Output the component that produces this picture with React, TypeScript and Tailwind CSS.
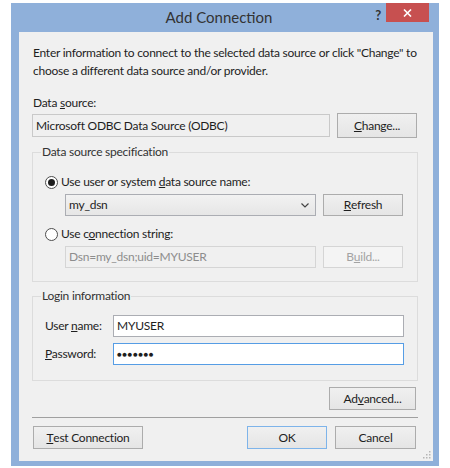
import React from 'react';

// Win8-style "Add Connection" dialog

const font = { fontFamily: 'Lato, "Noto Sans", sans-serif' };

const Btn: React.FC<{ children: React.ReactNode; className?: string; disabled?: boolean; isDefault?: boolean }> = ({
  children,
  className = '',
  disabled,
  isDefault,
}) => (
  <div
    className={`flex items-center justify-center border text-[12px] leading-none ${
      disabled
        ? 'border-[#d5d5d5] bg-[#f4f4f4] text-[#a3a3a3]'
        : isDefault
        ? 'border-[#7eb4ea] bg-gradient-to-b from-[#f0f0f0] to-[#e5e5e5] text-[#1e1e1e]'
        : 'border-[#acacac] bg-gradient-to-b from-[#f0f0f0] to-[#e5e5e5] text-[#1e1e1e]'
    } ${className}`}
  >
    {children}
  </div>
);

const Radio: React.FC<{ checked?: boolean; children: React.ReactNode }> = ({ checked, children }) => (
  <div className="flex h-[16px] items-center">
    <div className="flex h-[13px] w-[13px] items-center justify-center rounded-full border border-[#4d4d4d] bg-white">
      {checked && <div className="h-[7px] w-[7px] rounded-full bg-[#1e1e1e]" />}
    </div>
    <span className="ml-[3px] text-[12px] text-[#1e1e1e]">{children}</span>
  </div>
);

const GroupBox: React.FC<{ title: string; className?: string; children: React.ReactNode }> = ({
  title,
  className = '',
  children,
}) => (
  <div className={`relative border border-[#dcdcdc] ${className}`}>
    <span className="absolute -top-[10px] left-[8px] bg-[#f0f0f0] px-[1px] text-[12px] leading-[18px] text-[#333]">
      {title}
    </span>
    {children}
  </div>
);

export default function App() {
  return (
    <div className="h-[468px] w-[450px] bg-white pl-[11px] pt-[3px] tracking-[-0.25px]" style={font}>
      <div className="flex h-[463px] w-[428px] flex-col bg-[#8fb0da] pb-[5px] pl-[8px] pr-[6px]">
        {/* title bar */}
        <div className="relative flex h-[29px] shrink-0 items-center justify-center pr-[14px]">
          <span className="text-[15px] tracking-normal text-[#333]">Add Connection</span>
          <span className="absolute right-[52px] top-[3px] text-[13px] font-bold text-[#333]">?</span>
          <div className="absolute right-[4px] top-0 flex h-[19px] w-[43px] items-center justify-center bg-[#c75050]">
            <svg width="9" height="8" viewBox="0 0 9 8">
              <path d="M1 0.5 L8 7.5 M8 0.5 L1 7.5" stroke="white" strokeWidth="1.6" />
            </svg>
          </div>
        </div>

        {/* client area */}
        <div className="relative flex flex-1 flex-col bg-[#f0f0f0] pl-[13px] pr-[15px] pt-[12px] text-[12px] text-[#1e1e1e]">
          <p className="whitespace-nowrap pl-[1px] leading-[18px]">
            Enter information to connect to the selected data source or click "Change" to
            <br />
            choose a different data source and/or provider.
          </p>

          <div className="mt-[14px] pl-[1px] leading-[18px]">
            Data <u>s</u>ource:
          </div>
          <div className="mt-[1px] flex h-[25px] items-center">
            <div className="flex h-[23px] w-[298px] items-center border border-[#c9c9c9] bg-[#f0f0f0] pl-[3px]">
              Microsoft ODBC Data Source (ODBC)
            </div>
            <Btn className="ml-[7px] h-[25px] w-[80px]">
              <u>C</u>hange...
            </Btn>
          </div>

          <GroupBox title="Data source specification" className="mt-[14px] h-[130px] pl-[12px] pt-[21px]">
            <Radio checked>
              Use user or system <u>d</u>ata source name:
            </Radio>
            <div className="ml-[20px] mt-[4px] flex h-[22px]">
              <div className="flex w-[251px] items-center justify-between border border-[#abadb3] bg-gradient-to-b from-[#f2f2f2] to-[#e6e6e6] pl-[3px] pr-[6px]">
                <span>my_dsn</span>
                <svg width="8" height="5" viewBox="0 0 8 5">
                  <path d="M0.5 0.5 L4 4 L7.5 0.5" stroke="#444" strokeWidth="1.2" fill="none" />
                </svg>
              </div>
              <Btn className="ml-[7px] w-[80px]">
                <u>R</u>efresh
              </Btn>
            </div>
            <div className="mt-[10px]">
              <Radio>
                Use c<u>o</u>nnection string:
              </Radio>
            </div>
            <div className="ml-[20px] mt-[4px] flex h-[22px]">
              <div className="flex w-[251px] items-center border border-[#d5d5d5] bg-[#f0f0f0] pl-[3px] text-[#8d8d8d]">
                Dsn=my_dsn;uid=MYUSER
              </div>
              <Btn disabled className="ml-[7px] w-[80px]">
                B<u>u</u>ild...
              </Btn>
            </div>
          </GroupBox>

          <GroupBox title="Login information" className="mt-[14px] h-[85px] pl-[12px] pt-[18px]">
            <div className="flex h-[22px] items-center">
              <span className="w-[68px]">
                User <u>n</u>ame:
              </span>
              <div className="flex h-[22px] w-[291px] items-center border border-[#abadb3] bg-white pl-[3px]">
                MYUSER
              </div>
            </div>
            <div className="mt-[6px] flex h-[22px] items-center">
              <span className="w-[68px]">
                <u>P</u>assword:
              </span>
              <div className="flex h-[22px] w-[291px] items-center border border-[#569de5] bg-white pl-[3px] text-[8px] tracking-[0.5px]">
                ●●●●●●●
              </div>
            </div>
          </GroupBox>

          <div className="mt-[6px] flex justify-end pr-[2px]">
            <Btn className="h-[23px] w-[87px]">
              Ad<u>v</u>anced...
            </Btn>
          </div>

          <div className="mt-[7px] h-px bg-[#a0a0a0]" />

          <div className="mt-[8px] flex h-[23px] items-center pl-[1px] pr-[2px]">
            <Btn className="h-[23px] w-[110px]">
              <u>T</u>est Connection
            </Btn>
            <div className="flex-1" />
            <Btn isDefault className="h-[23px] w-[80px]">
              OK
            </Btn>
            <Btn className="ml-[8px] h-[23px] w-[81px]">Cancel</Btn>
          </div>

          {/* size grip */}
          <svg className="absolute bottom-[2px] right-[2px]" width="8" height="8" viewBox="0 0 8 8">
            <rect x="6" y="0" width="1.5" height="1.5" fill="#b5b5b5" />
            <rect x="3" y="3" width="1.5" height="1.5" fill="#b5b5b5" />
            <rect x="6" y="3" width="1.5" height="1.5" fill="#b5b5b5" />
            <rect x="0" y="6" width="1.5" height="1.5" fill="#b5b5b5" />
            <rect x="3" y="6" width="1.5" height="1.5" fill="#b5b5b5" />
            <rect x="6" y="6" width="1.5" height="1.5" fill="#b5b5b5" />
          </svg>
        </div>
      </div>
    </div>
  );
}
